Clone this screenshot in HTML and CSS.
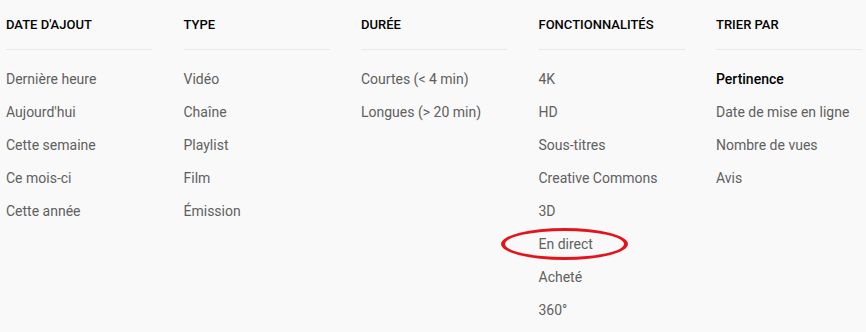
FILE: index.html
```html
<!DOCTYPE html>
<html lang="fr">
<head>
  <meta charset="UTF-8">
  <title>Filtres de recherche</title>
  <link rel="stylesheet" href="styles.css">
</head>
<body>
  <div class="filters">
    <div class="group">
      <h4 class="group-title">Date d'ajout</h4>
      <ul class="options">
        <li>Dernière heure</li>
        <li>Aujourd'hui</li>
        <li>Cette semaine</li>
        <li>Ce mois-ci</li>
        <li>Cette année</li>
      </ul>
    </div>
    <div class="group">
      <h4 class="group-title">Type</h4>
      <ul class="options">
        <li>Vidéo</li>
        <li>Chaîne</li>
        <li>Playlist</li>
        <li>Film</li>
        <li>Émission</li>
      </ul>
    </div>
    <div class="group">
      <h4 class="group-title">Durée</h4>
      <ul class="options">
        <li>Courtes (&lt; 4 min)</li>
        <li>Longues (&gt; 20 min)</li>
      </ul>
    </div>
    <div class="group">
      <h4 class="group-title">Fonctionnalités</h4>
      <ul class="options">
        <li>4K</li>
        <li>HD</li>
        <li>Sous-titres</li>
        <li>Creative Commons</li>
        <li>3D</li>
        <li class="marked"><span class="ring"></span>En direct</li>
        <li>Acheté</li>
        <li>360°</li>
      </ul>
    </div>
    <div class="group">
      <h4 class="group-title">Trier par</h4>
      <ul class="options">
        <li class="active">Pertinence</li>
        <li>Date de mise en ligne</li>
        <li>Nombre de vues</li>
        <li>Avis</li>
      </ul>
    </div>
  </div>
</body>
</html>
```

FILE: styles.css
```css
* {
  margin: 0;
  padding: 0;
  box-sizing: border-box;
}

body {
  font-family: Roboto, 'Liberation Sans', sans-serif;
  background-color: #f9f9f9;
  color: #606060;
  width: 866px;
  height: 332px;
  overflow: hidden;
}

.filters {
  display: grid;
  grid-template-columns: repeat(5, 146px);
  column-gap: 31.5px;
  padding-left: 6px;
}

.group-title {
  font-size: 13px;
  font-weight: 500;
  line-height: 16px;
  text-transform: uppercase;
  color: #030303;
  padding: 17px 0 16px;
  border-bottom: 1px solid #e8e8e8;
}

.options {
  list-style: none;
  padding-top: 13px;
}

.options li {
  font-size: 14px;
  line-height: 33px;
  height: 33px;
  white-space: nowrap;
}

.options li.active {
  color: #030303;
  font-weight: 500;
}

.marked {
  position: relative;
}

.ring {
  position: absolute;
  left: -38px;
  top: 0;
  width: 127px;
  height: 32px;
  border: 3px solid #e3141c;
  border-width: 3px 4px;
  border-radius: 50%;
}
```
